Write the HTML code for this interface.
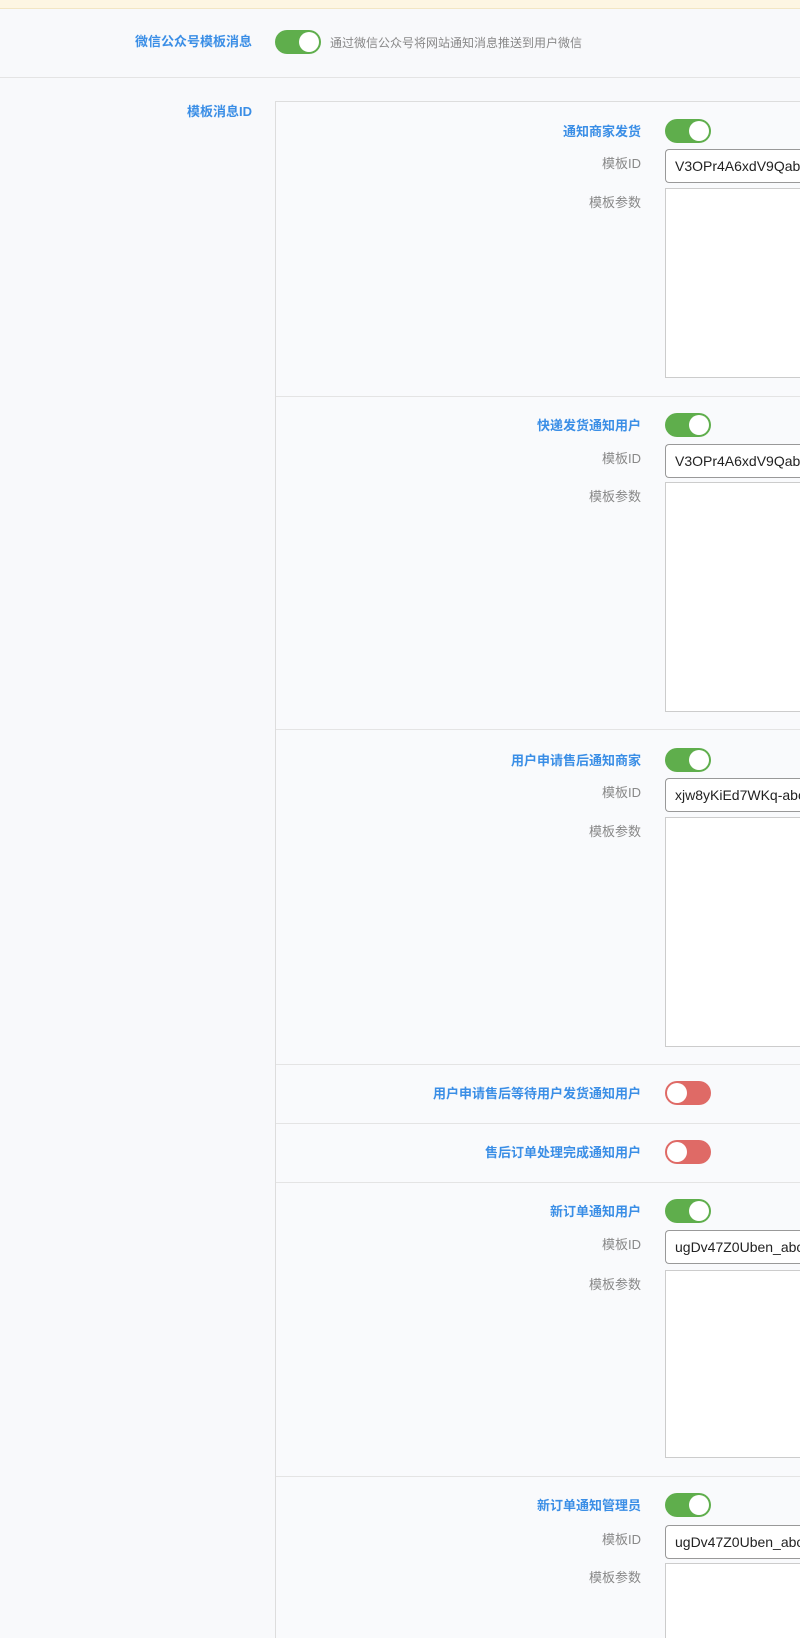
<!DOCTYPE html>
<html style="overflow:hidden;height:1638px"><head><meta charset="utf-8"><style>
body{margin:0;width:800px;height:1638px;overflow:hidden;background:#f8f9fb;font-family:"Liberation Sans","Noto Sans CJK SC",sans-serif;position:relative}
.a{position:absolute}
.lb{color:#3a8ee6;font-size:13px;font-weight:bold;text-align:right;white-space:nowrap}
.gl{color:#888;font-size:13px;text-align:right;white-space:nowrap}
.tg{position:absolute;width:46px;height:24px;border-radius:12px;background:#5fae4c}
.tg::after{content:"";position:absolute;top:2px;right:2px;width:20px;height:20px;border-radius:50%;background:#fff}
.tg.off{background:#df6a66}.tg.off::after{right:auto;left:2px}
.in{position:absolute;left:665px;width:135px;border:1px solid #999;border-right:0;border-radius:4px 0 0 4px;background:#fff;font-size:14px;color:#222;box-sizing:border-box;padding:0 9px;line-height:32px;white-space:nowrap;overflow:hidden}
.ta{position:absolute;left:665px;width:135px;border:1px solid #ccc;border-right:0;background:#fff;box-sizing:border-box}
.hr{position:absolute;left:276px;right:0;height:1px;background:#e4e4e4}
</style></head><body>
<div class="a" style="left:0;top:0;width:800px;height:8px;background:#fdf6e3;border-bottom:1px solid #f2e6c4"></div>
<div class="a lb" style="right:548px;top:31px">微信公众号模板消息</div>
<div class="tg" style="left:275px;top:30px"></div>
<div class="a" style="left:330px;top:34px;font-size:12px;color:#888">通过微信公众号将网站通知消息推送到用户微信</div>
<div class="a" style="left:0;right:0;top:77px;height:1px;background:#e4e4e4"></div>
<div class="a lb" style="right:548px;top:101px">模板消息ID</div>
<div class="a" style="left:275px;top:101px;width:524px;height:1537px;border-left:1px solid #ddd;border-top:1px solid #ddd;background:#f9fafc"></div>

<div class="a lb" style="right:159px;top:121px">通知商家发货</div><div class="tg" style="left:665px;top:119px"></div>
<div class="a gl" style="right:159px;top:153px">模板ID</div><div class="in" style="top:149px;height:34px">V3OPr4A6xdV9Qabc</div>
<div class="a gl" style="right:159px;top:192px">模板参数</div><div class="ta" style="top:188px;height:190px"></div>
<div class="hr" style="top:396px"></div>

<div class="a lb" style="right:159px;top:415px">快递发货通知用户</div><div class="tg" style="left:665px;top:413px"></div>
<div class="a gl" style="right:159px;top:448px">模板ID</div><div class="in" style="top:444px;height:34px">V3OPr4A6xdV9Qabc</div>
<div class="a gl" style="right:159px;top:486px">模板参数</div><div class="ta" style="top:482px;height:230px"></div>
<div class="hr" style="top:729px"></div>

<div class="a lb" style="right:159px;top:750px">用户申请售后通知商家</div><div class="tg" style="left:665px;top:748px"></div>
<div class="a gl" style="right:159px;top:782px">模板ID</div><div class="in" style="top:778px;height:34px">xjw8yKiEd7WKq-abc</div>
<div class="a gl" style="right:159px;top:821px">模板参数</div><div class="ta" style="top:817px;height:230px"></div>
<div class="hr" style="top:1064px"></div>

<div class="a lb" style="right:159px;top:1083px">用户申请售后等待用户发货通知用户</div><div class="tg off" style="left:665px;top:1081px"></div>
<div class="hr" style="top:1123px"></div>
<div class="a lb" style="right:159px;top:1142px">售后订单处理完成通知用户</div><div class="tg off" style="left:665px;top:1140px"></div>
<div class="hr" style="top:1182px"></div>

<div class="a lb" style="right:159px;top:1201px">新订单通知用户</div><div class="tg" style="left:665px;top:1199px"></div>
<div class="a gl" style="right:159px;top:1234px">模板ID</div><div class="in" style="top:1230px;height:34px">ugDv47Z0Uben_abc</div>
<div class="a gl" style="right:159px;top:1274px">模板参数</div><div class="ta" style="top:1270px;height:188px"></div>
<div class="hr" style="top:1476px"></div>

<div class="a lb" style="right:159px;top:1495px">新订单通知管理员</div><div class="tg" style="left:665px;top:1493px"></div>
<div class="a gl" style="right:159px;top:1529px">模板ID</div><div class="in" style="top:1525px;height:34px">ugDv47Z0Uben_abc</div>
<div class="a gl" style="right:159px;top:1567px">模板参数</div><div class="ta" style="top:1563px;height:75px;border-bottom:0"></div>
</body></html>
